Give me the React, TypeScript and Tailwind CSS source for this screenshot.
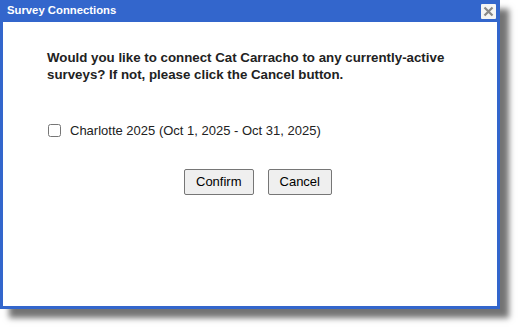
export default function App() {
    return (
        <div className="w-[529px] h-[332px] bg-white relative font-['Liberation_Sans',Arial,sans-serif]">
            <div className="w-[500px] h-[309px] bg-[#3366cc] flex flex-col px-[3px] pb-[3px] shadow-[9px_9px_6px_rgba(0,0,0,0.55)]">
                <div className="h-[22px] flex items-center justify-between pl-[4px] pr-[1px]">
                    <span className="text-white font-bold text-[11.3px] leading-none">Survey Connections</span>
                    <button className="w-[15px] h-[15px] bg-[#f4f4f4] flex items-center justify-center rounded-[1px]">
                        <svg width="11" height="11" viewBox="0 0 11 11">
                            <path d="M1.5 1.5 L9.5 9.5 M9.5 1.5 L1.5 9.5" stroke="#888" strokeWidth="2.2" />
                        </svg>
                    </button>
                </div>
                <div className="flex-1 bg-white pl-[44px] pr-[20px] pt-[27px]">
                    <p className="text-[13.3px] leading-[17px] font-bold text-[#222]">
                        Would you like to connect Cat Carracho to any currently-active surveys? If not, please click the Cancel button.
                    </p>
                    <label className="flex items-center mt-[38px] text-[13px] text-[#222]">
                        <input type="checkbox" className="w-[13px] h-[13px] m-0 ml-[1px] mr-[9px]" />
                        Charlotte 2025 (Oct 1, 2025 - Oct 31, 2025)
                    </label>
                    <div className="flex justify-center gap-[14px] mt-[28px] pr-[8px]">
                        <button className="h-[26px] px-[11px] bg-[#efefef] border border-[#767676] rounded-[2px] text-[13px] text-black">Confirm</button>
                        <button className="h-[26px] px-[11px] bg-[#efefef] border border-[#767676] rounded-[2px] text-[13px] text-black">Cancel</button>
                    </div>
                </div>
            </div>
        </div>
    );
}
